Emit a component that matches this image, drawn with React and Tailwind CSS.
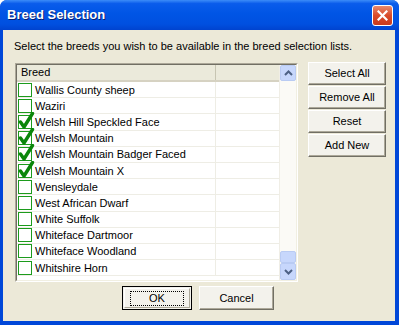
import React from 'react';

const breeds = [
  { name: 'Wallis County sheep', on: false },
  { name: 'Waziri', on: false },
  { name: 'Welsh Hill Speckled Face', on: true },
  { name: 'Welsh Mountain', on: true },
  { name: 'Welsh Mountain Badger Faced', on: true },
  { name: 'Welsh Mountain X', on: true },
  { name: 'Wensleydale', on: false },
  { name: 'West African Dwarf', on: false },
  { name: 'White Suffolk', on: false },
  { name: 'Whiteface Dartmoor', on: false },
  { name: 'Whiteface Woodland', on: false },
  { name: 'Whitshire Horn', on: false },
];

function Check({ on }) {
  return (
    <div className="relative w-[14px] h-[14px] border border-[#1C9B1C] bg-white shrink-0">
      {on && (
        <svg className="absolute left-[-1px] top-[-4px]" width="17" height="18" viewBox="0 0 17 18">
          <path d="M2.5 10 L6 15 L14.5 1.5" fill="none" stroke="#0B860B" strokeWidth="3.4" strokeLinecap="round" strokeLinejoin="round" />
        </svg>
      )}
    </div>
  );
}

function Arrow({ up }) {
  return (
    <svg width="9" height="6" viewBox="0 0 9 6">
      <path d={up ? 'M1 5 L4.5 1.5 L8 5' : 'M1 1 L4.5 4.5 L8 1'} fill="none" stroke="#4D6185" strokeWidth="2" />
    </svg>
  );
}

function SideButton({ children }) {
  return (
    <button className="w-[78px] h-[23px] bg-[#F3F2EC] border border-t-white border-l-white border-b-[#716F64] border-r-[#716F64] shadow-[inset_-1px_-1px_0_#ACA899] text-[11px] text-black">
      {children}
    </button>
  );
}

export default function App() {
  return (
    <div className="w-[399px] h-[325px] flex flex-col bg-[#0047D8] rounded-t-[7px] overflow-hidden" style={{ fontFamily: '"Liberation Sans", Arial, sans-serif' }}>
      <div className="h-[30px] shrink-0 flex items-center pl-[7px] pr-[6px] bg-[linear-gradient(180deg,#3C8CF8_0%,#0A5CEB_12%,#0055E5_45%,#0050E0_80%,#0043CF_100%)]">
        <span className="text-white font-bold text-[13px] flex-1 [text-shadow:1px_1px_0_#0A1E6E]">Breed Selection</span>
        <div className="w-[21px] h-[21px] rounded-[3px] border border-white bg-[linear-gradient(180deg,#E88A6E_0%,#D94B2A_50%,#C93A1D_100%)] flex items-center justify-center">
          <svg width="11" height="11" viewBox="0 0 11 11">
            <path d="M1.5 1.5 L9.5 9.5 M9.5 1.5 L1.5 9.5" stroke="white" strokeWidth="2.2" strokeLinecap="square" />
          </svg>
        </div>
      </div>
      <div className="flex-1 ml-[3px] mr-[4px] mb-[4px] bg-[#ECE9D8] pl-[11px] pt-[9px] flex flex-col">
        <div className="text-[11px] leading-[14px] text-black">Select the breeds you wish to be available in the breed selection lists.</div>
        <div className="flex items-start mt-[10px] ml-[1px]">
          <div className="w-[283px] h-[219px] border border-t-[#ACA899] border-l-[#ACA899] border-r-white border-b-white">
            <div className="w-full h-full border border-t-[#716F64] border-l-[#716F64] border-r-[#F1EFE2] border-b-[#F1EFE2] bg-white flex">
              <div className="flex-1 flex flex-col">
                <div className="h-[17px] shrink-0 flex bg-[#EBEADB] border-b-2 border-[#D6D2C2] text-[11px] text-black">
                  <div className="w-[199px] pl-[4px] border-r border-[#C7C5B2] leading-[15px]">Breed</div>
                  <div className="flex-1" />
                </div>
                {breeds.map((b) => (
                  <div key={b.name} className="h-[16.2px] flex border-b border-[#EEEDE5] text-[11px] text-black shrink-0">
                    <div className="w-[199px] flex items-center pl-[1px] gap-[3px] border-r border-[#EEEDE5]">
                      <Check on={b.on} />
                      <span className="leading-[14px]">{b.name}</span>
                    </div>
                    <div className="flex-1" />
                  </div>
                ))}
              </div>
              <div className="w-[17px] flex flex-col bg-[#FBFAF6] border-l border-[#F0EEE6]">
                <div className="h-[16px] rounded-[2px] border border-[#B9CBF3] bg-[#C7D7FC] flex items-center justify-center"><Arrow up /></div>
                <div className="flex-1" />
                <div className="h-[12px] rounded-[2px] border border-[#B9CBF3] bg-[#C7D7FC]" />
                <div className="h-[17px] rounded-[2px] border border-[#B9CBF3] bg-[#C7D7FC] flex items-center justify-center"><Arrow /></div>
              </div>
            </div>
          </div>
          <div className="ml-[10px] mt-[-1px] flex flex-col gap-[1px]">
            <SideButton>Select All</SideButton>
            <SideButton>Remove All</SideButton>
            <SideButton>Reset</SideButton>
            <SideButton>Add New</SideButton>
          </div>
        </div>
        <div className="flex mt-[4px] ml-[108px] gap-[7px]">
          <button className="w-[70px] h-[24px] border border-black bg-[#F3F2EC] p-[1px]">
            <div className="w-full h-full border border-t-white border-l-white border-b-[#ACA899] border-r-[#ACA899] flex items-center justify-center">
              <div className="border border-dotted border-black px-[18px] text-[11px] leading-[13px]">OK</div>
            </div>
          </button>
          <button className="w-[75px] h-[24px] bg-[#F3F2EC] border border-t-white border-l-white border-b-[#716F64] border-r-[#716F64] shadow-[inset_-1px_-1px_0_#ACA899] text-[11px]">Cancel</button>
        </div>
      </div>
    </div>
  );
}
